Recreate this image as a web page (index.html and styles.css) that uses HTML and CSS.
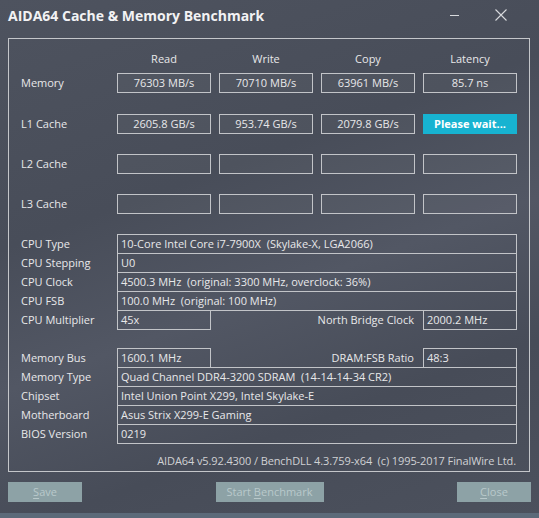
FILE: index.html
```html
<!DOCTYPE html>
<html>
<head>
<meta charset="utf-8">
<link rel="stylesheet" href="styles.css">
</head>
<body>
<div class="window">
  <div class="titlebar">
    <div class="title">AIDA64 Cache &amp; Memory Benchmark</div>
    <div class="controls">
      <svg class="ctl" width="14" height="14" viewBox="0 0 14 14"><path d="M2 7.5H11" stroke="#d8dadd" stroke-width="1"/></svg>
      <svg class="ctl" width="14" height="14" viewBox="0 0 14 14"><path d="M1.5 1.5L12.5 12.5M12.5 1.5L1.5 12.5" stroke="#d8dadd" stroke-width="1.1"/></svg>
    </div>
  </div>

  <div class="panel">
    <div class="bench">
      <div class="brow head">
        <div></div>
        <div class="c">Read</div>
        <div class="c">Write</div>
        <div class="c">Copy</div>
        <div class="c">Latency</div>
      </div>
      <div class="brow first">
        <div class="lbl">Memory</div>
        <div class="cell">76303 MB/s</div>
        <div class="cell">70710 MB/s</div>
        <div class="cell">63961 MB/s</div>
        <div class="cell">85.7 ns</div>
      </div>
      <div class="brow second">
        <div class="lbl">L1 Cache</div>
        <div class="cell">2605.8 GB/s</div>
        <div class="cell">953.74 GB/s</div>
        <div class="cell">2079.8 GB/s</div>
        <div class="cell wait">Please wait...</div>
      </div>
      <div class="brow">
        <div class="lbl">L2 Cache</div>
        <div class="cell"></div>
        <div class="cell"></div>
        <div class="cell"></div>
        <div class="cell"></div>
      </div>
      <div class="brow">
        <div class="lbl">L3 Cache</div>
        <div class="cell"></div>
        <div class="cell"></div>
        <div class="cell"></div>
        <div class="cell"></div>
      </div>
    </div>

    <div class="info cpu">
      <div class="row wide"><div class="lbl">CPU Type</div><div class="val">10-Core Intel Core i7-7900X  (Skylake-X, LGA2066)</div></div>
      <div class="row wide"><div class="lbl">CPU Stepping</div><div class="val">U0</div></div>
      <div class="row wide"><div class="lbl">CPU Clock</div><div class="val">4500.3 MHz  (original: 3300 MHz, overclock: 36%)</div></div>
      <div class="row wide"><div class="lbl">CPU FSB</div><div class="val">100.0 MHz  (original: 100 MHz)</div></div>
      <div class="row split"><div class="lbl">CPU Multiplier</div><div class="val">45x</div><div class="lbl r">North Bridge Clock</div><div class="val">2000.2 MHz</div></div>
    </div>

    <div class="info mem">
      <div class="row split"><div class="lbl">Memory Bus</div><div class="val">1600.1 MHz</div><div class="lbl r">DRAM:FSB Ratio</div><div class="val">48:3</div></div>
      <div class="row wide"><div class="lbl">Memory Type</div><div class="val">Quad Channel DDR4-3200 SDRAM  (14-14-14-34 CR2)</div></div>
      <div class="row wide"><div class="lbl">Chipset</div><div class="val">Intel Union Point X299, Intel Skylake-E</div></div>
      <div class="row wide"><div class="lbl">Motherboard</div><div class="val">Asus Strix X299-E Gaming</div></div>
      <div class="row wide"><div class="lbl">BIOS Version</div><div class="val">0219</div></div>
    </div>

    <div class="footer">AIDA64 v5.92.4300 / BenchDLL 4.3.759-x64  (c) 1995-2017 FinalWire Ltd.</div>
  </div>

  <div class="buttons">
    <div class="btn small"><u>S</u>ave</div>
    <div class="btn large">Start <u>B</u>enchmark</div>
    <div class="btn small"><u>C</u>lose</div>
  </div>
</div>
<div class="strip"></div>
</body>
</html>
```

FILE: styles.css
```css
html, body {
  margin: 0;
  padding: 0;
}
body {
  width: 539px;
  height: 518px;
  overflow: hidden;
  background: linear-gradient(160deg, #4e535f 0%, #484d59 35%, #525764 55%, #474c58 75%, #4c515d 100%);
  font-family: "Open Sans", "Noto Sans", sans-serif;
  font-size: 11px;
  color: #e8e8ea;
}
.window {
  height: 513px;
}
.titlebar {
  height: 38px;
  display: flex;
  align-items: flex-start;
  justify-content: space-between;
}
.title {
  margin: 6px 0 0 8px;
  font-size: 14px;
  font-weight: bold;
  color: #f2f2f4;
  line-height: 20px;
}
.controls {
  display: flex;
  gap: 32px;
  margin: 8px 31px 0 0;
}
.ctl { display: block; }

.panel {
  margin-left: 8px;
  width: 522px;
  box-sizing: border-box;
  border: 1px solid #c4c6ca;
  padding: 12px 12px 2px 12px;
}
.bench {
  display: flex;
  flex-direction: column;
}
.brow {
  display: grid;
  grid-template-columns: 88px repeat(4, 94px);
  column-gap: 8px;
  height: 20px;
  margin-top: 20px;
}
.brow.head {
  height: 16px;
  line-height: 16px;
  margin-top: 0;
}
.brow.first { margin-top: 6px; }
.brow.second { margin-top: 21px; }
.c { text-align: center; }
.lbl {
  line-height: 20px;
  white-space: nowrap;
}
.cell {
  box-sizing: border-box;
  height: 20px;
  border: 1px solid #c2c4c8;
  background: rgba(255,255,255,0.035);
  text-align: center;
  line-height: 18px;
}
.cell.wait {
  background: #17b3d1;
  border-color: #17b3d1;
  font-weight: bold;
  color: #ffffff;
}

.info { display: flex; flex-direction: column; }
.cpu { margin-top: 20px; }
.mem { margin-top: 18px; }
.row {
  display: grid;
  height: 20px;
  margin-top: -1px;
}
.row:first-child { margin-top: 0; }
.row.wide { grid-template-columns: 96px 400px; }
.row.split { grid-template-columns: 96px 94px 212px 94px; }
.val {
  box-sizing: border-box;
  height: 20px;
  border: 1px solid #c2c4c8;
  padding-left: 3px;
  line-height: 18px;
  white-space: pre;
  overflow: hidden;
}
.lbl.r {
  text-align: right;
  padding-right: 9px;
}
.footer {
  margin-top: 9px;
  line-height: 16px;
  text-align: right;
  padding-right: 1px;
  white-space: pre;
  letter-spacing: -0.1px;
  color: #d0d1d4;
}

.buttons {
  margin: 10px 0 0 8px;
  width: 523px;
  display: flex;
  justify-content: space-between;
}
.btn {
  height: 20px;
  line-height: 20px;
  background: #8da2a6;
  color: #b9c9cb;
  text-align: center;
  font-size: 11px;
}
.btn.small { width: 74px; }
.btn.large { width: 108px; }
.btn u { text-decoration-thickness: 1px; text-underline-offset: 2px; }

.strip {
  height: 5px;
  background: #5c6a79;
}
```
